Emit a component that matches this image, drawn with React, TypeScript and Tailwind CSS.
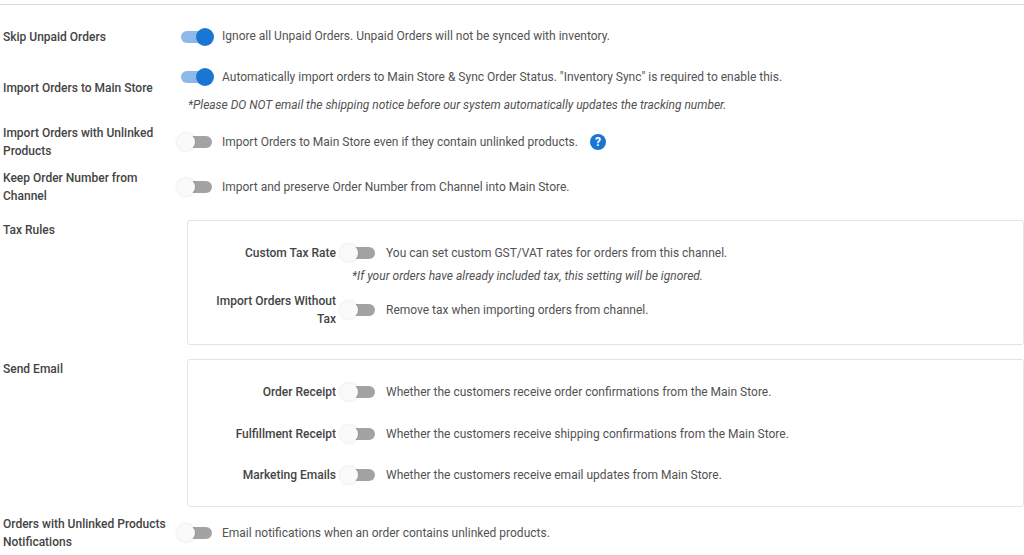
function Toggle({ on = false }: { on?: boolean }) {
  return (
    <div className="relative w-[34px] h-[18px] shrink-0">
      <div className={`absolute left-[3px] top-[3px] w-[31px] h-[12px] rounded-full ${on ? "bg-[#8db9e8]" : "bg-[#a3a3a3]"}`} />
      <div
        className={`absolute top-0 w-[18px] h-[18px] rounded-full ${
          on ? "left-[18px] bg-[#1976d2]" : "left-[-1px] bg-[#fafafa] shadow-[0_0_3px_rgba(0,0,0,0.14)]"
        }`}
      />
    </div>
  );
}

function Row({ label, text, className = "", textClass = "", on = false, help = false }: { label: string; text: string; className?: string; textClass?: string; on?: boolean; help?: boolean }) {
  return (
    <div className={`flex items-center ${className}`}>
      <div className="w-[178px] pl-[3px] pr-[4px] font-medium text-[#444444] leading-[18px] shrink-0">{label}</div>
      <Toggle on={on} />
      <div className={`ml-[10px] ${textClass}`}>{text}</div>
      {help && (
        <div className="ml-[12px] w-[16px] h-[16px] rounded-full bg-[#1976d2] text-white text-[12px] font-bold flex items-center justify-center">?</div>
      )}
    </div>
  );
}

function SubRow({ label, text, className = "" }: { label: string; text: string; className?: string }) {
  return (
    <div className={`flex items-center ${className}`}>
      <div className="w-[148px] pl-[21px] text-right font-medium text-[#444444] leading-[18px] shrink-0">{label}</div>
      <div className="ml-[5px]"><Toggle /></div>
      <div className="ml-[11px]">{text}</div>
    </div>
  );
}

export default function App() {
  return (
    <div className="w-[1024px] h-[555px] overflow-hidden bg-white text-[#525252] text-[12px] font-['Roboto',sans-serif]">
      <div className="h-[5px] border-b border-[#dcdcdc]" />
      <Row label="Skip Unpaid Orders" text="Ignore all Unpaid Orders. Unpaid Orders will not be synced with inventory." textClass="pb-[2px]" on className="mt-[23px] h-[18px]" />
      <div className="flex mt-[22px] h-[47px]">
        <div className="w-[178px] pl-[3px] pt-[11px] font-medium text-[#444444] leading-[18px] shrink-0">Import Orders to Main Store</div>
        <div>
          <div className="flex items-center h-[18px]">
            <Toggle on />
            <div className="ml-[10px]">Automatically import orders to Main Store &amp; Sync Order Status. "Inventory Sync" is required to enable this.</div>
          </div>
          <div className="italic mt-[10px] ml-[10px] leading-[18px] tracking-[-0.02px]">*Please DO NOT email the shipping notice before our system automatically updates the tracking number.</div>
        </div>
      </div>
      <Row label="Import Orders with Unlinked Products" text="Import Orders to Main Store even if they contain unlinked products." help className="mt-[9px] h-[36px]" />
      <Row label="Keep Order Number from Channel" text="Import and preserve Order Number from Channel into Main Store." className="mt-[9px] h-[36px]" />
      <div className="flex mt-[15px]">
        <div className="w-[187px] pl-[3px] pt-[1px] font-medium text-[#444444] leading-[18px] shrink-0">Tax Rules</div>
        <div className="w-[900px] h-[125px] border border-[#e4e4e4] rounded-[3px] pt-[23px]">
          <SubRow label="Custom Tax Rate" text="You can set custom GST/VAT rates for orders from this channel." className="h-[18px]" />
          <div className="italic ml-[164px] mt-[5px] leading-[18px]">*If your orders have already included tax, this setting will be ignored.</div>
          <SubRow label="Import Orders Without Tax" text="Remove tax when importing orders from channel." className="h-[36px] mt-[7px]" />
        </div>
      </div>
      <div className="flex mt-[14px]">
        <div className="w-[187px] pl-[3px] pt-[1px] font-medium text-[#444444] leading-[18px] shrink-0">Send Email</div>
        <div className="w-[900px] h-[148px] border border-[#e4e4e4] rounded-[3px] pt-[23px] flex flex-col gap-[23.5px]">
          <SubRow label="Order Receipt" text="Whether the customers receive order confirmations from the Main Store." className="h-[18px]" />
          <SubRow label="Fulfillment Receipt" text="Whether the customers receive shipping confirmations from the Main Store." className="h-[18px]" />
          <SubRow label="Marketing Emails" text="Whether the customers receive email updates from Main Store." className="h-[18px]" />
        </div>
      </div>
      <Row label="Orders with Unlinked Products Notifications" text="Email notifications when an order contains unlinked products." className="mt-[8px] h-[36px]" />
    </div>
  );
}
